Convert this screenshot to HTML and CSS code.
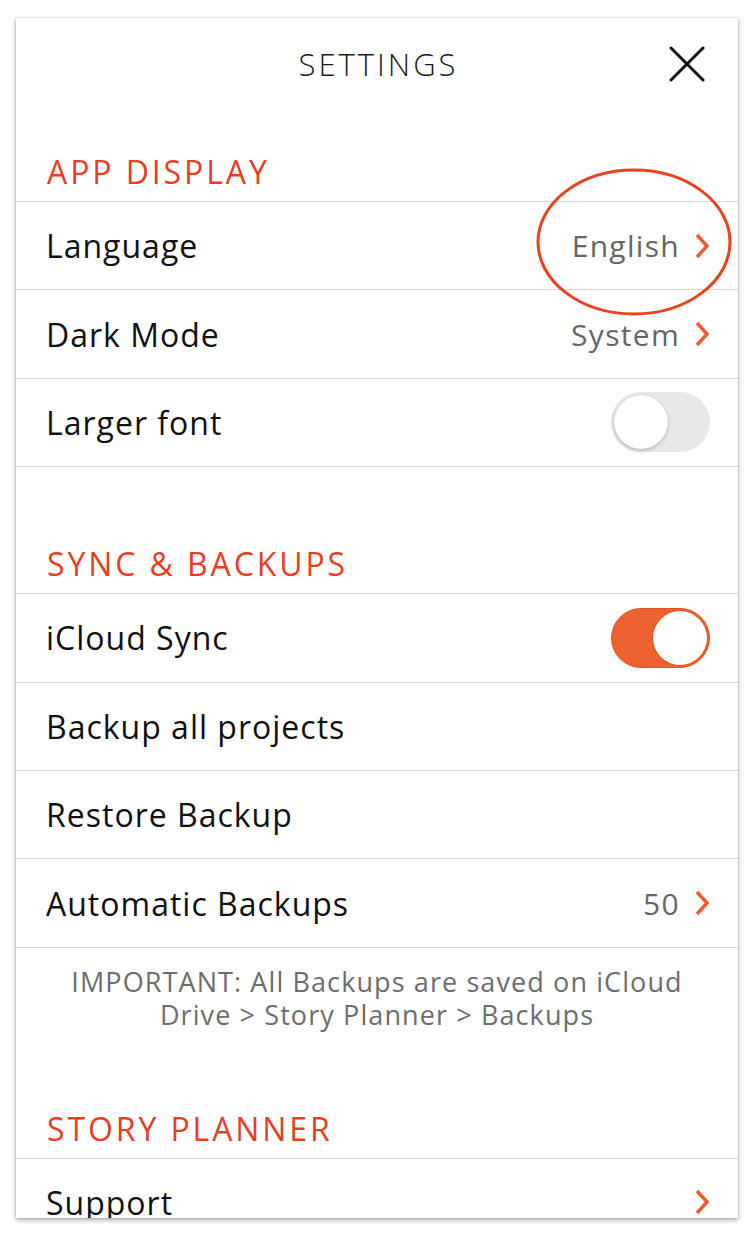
FILE: index.html
```html
<!DOCTYPE html>
<html lang="en">
<head>
<meta charset="utf-8">
<title>Settings</title>
<link rel="stylesheet" href="styles.css">
</head>
<body>
<div class="card">
  <header class="header">
    <h1 class="title">SETTINGS</h1>
    <button class="close" aria-label="Close">
      <svg width="36" height="36" viewBox="0 0 36 36"><path d="M2 2 L34 34 M34 2 L2 34" stroke="#111" stroke-width="3" stroke-linecap="round" fill="none"/></svg>
    </button>
  </header>

  <section class="section">
    <h2 class="section-title">APP DISPLAY</h2>
    <div class="row">
      <span class="label">Language</span>
      <span class="value">English<svg class="chev" width="16" height="26" viewBox="0 0 16 26"><path d="M3 2 L13 13 L3 24" stroke="#ef5b2c" stroke-width="3.4" fill="none"/></svg></span>
    </div>
    <div class="row">
      <span class="label">Dark Mode</span>
      <span class="value">System<svg class="chev" width="16" height="26" viewBox="0 0 16 26"><path d="M3 2 L13 13 L3 24" stroke="#ef5b2c" stroke-width="3.4" fill="none"/></svg></span>
    </div>
    <div class="row">
      <span class="label">Larger font</span>
      <span class="toggle"><span class="knob"></span></span>
    </div>
  </section>

  <section class="section section-gap">
    <h2 class="section-title">SYNC &amp; BACKUPS</h2>
    <div class="row">
      <span class="label">iCloud Sync</span>
      <span class="toggle on"><span class="knob"></span></span>
    </div>
    <div class="row">
      <span class="label">Backup all projects</span>
    </div>
    <div class="row">
      <span class="label">Restore Backup</span>
    </div>
    <div class="row">
      <span class="label">Automatic Backups</span>
      <span class="value">50<svg class="chev" width="16" height="26" viewBox="0 0 16 26"><path d="M3 2 L13 13 L3 24" stroke="#ef5b2c" stroke-width="3.4" fill="none"/></svg></span>
    </div>
    <p class="note">IMPORTANT: All Backups are saved on iCloud Drive &gt; Story Planner &gt; Backups</p>
  </section>

  <section class="section">
    <h2 class="section-title">STORY PLANNER</h2>
    <div class="row">
      <span class="label">Support</span>
      <span class="value"><svg class="chev" width="16" height="26" viewBox="0 0 16 26"><path d="M3 2 L13 13 L3 24" stroke="#ef5b2c" stroke-width="3.4" fill="none"/></svg></span>
    </div>
  </section>

  <svg class="annotation" width="200" height="150" viewBox="0 0 200 150"><ellipse cx="100" cy="75" rx="96" ry="72" stroke="#e8431f" stroke-width="3" fill="none"/></svg>
</div>
</body>
</html>
```

FILE: styles.css
```css
* { box-sizing: border-box; }
html, body { margin: 0; padding: 0; background: #fff; }
body {
  font-family: "Open Sans", "Liberation Sans", sans-serif;
  width: 750px;
  height: 1244px;
  overflow: hidden;
}
.card {
  position: relative;
  margin: 18px 0 0 16px;
  width: 722px;
  height: 1200px;
  background: #fff;
  overflow: hidden;
  box-shadow: 0 2px 5px rgba(0,0,0,0.35), 0 0 1px rgba(0,0,0,0.3);
}
.header {
  height: 92px;
  display: flex;
  align-items: center;
  justify-content: center;
  position: relative;
}
.title {
  margin: 0 0 0 3px;
  font-size: 31px;
  font-weight: 300;
  letter-spacing: 3px;
  color: #1a1a1a;
}
.close {
  position: absolute;
  right: 33px;
  top: 28px;
  border: 0;
  background: none;
  padding: 0;
  width: 36px;
  height: 36px;
}
.close svg { display: block; }
.section-title {
  margin: 0;
  padding: 46px 0 13px 31px;
  font-size: 32px;
  line-height: 32px;
  font-weight: 400;
  letter-spacing: 2.9px;
  color: #e63f26;
  border-bottom: 1px solid #d8d8d8;
}
.section-gap { margin-top: 35px; }
.row {
  height: 88.4px;
  display: flex;
  align-items: center;
  justify-content: space-between;
  padding: 0 28px 0 30px;
  border-bottom: 1px solid #d8d8d8;
}
.label {
  font-size: 32px;
  letter-spacing: 1px;
  color: #111;
}
.value {
  display: flex;
  align-items: center;
  gap: 14px;
  font-size: 30px;
  letter-spacing: 1.3px;
  color: #666;
}
.chev { display: block; }
.toggle {
  position: relative;
  width: 99px;
  height: 60px;
  border-radius: 30px;
  background: #e9e9ea;
}
.toggle .knob {
  position: absolute;
  top: 3px;
  left: 3px;
  width: 54px;
  height: 54px;
  border-radius: 50%;
  background: #fff;
  box-shadow: 0 2px 4px rgba(0,0,0,0.18), 0 0 1px rgba(0,0,0,0.2);
}
.toggle.on { background: #ee6131; border: 1px solid #e2551f; }
.toggle.on .knob { left: auto; right: 2px; top: 2px; box-shadow: 0 0 0 1px #e2551f; }
.note {
  margin: 0;
  padding: 17px 40px 36px;
  text-align: center;
  font-size: 27px;
  line-height: 33px;
  letter-spacing: 1.1px;
  color: #6d6d6d;
}
.annotation {
  position: absolute;
  left: 518px;
  top: 149px;
}
```
